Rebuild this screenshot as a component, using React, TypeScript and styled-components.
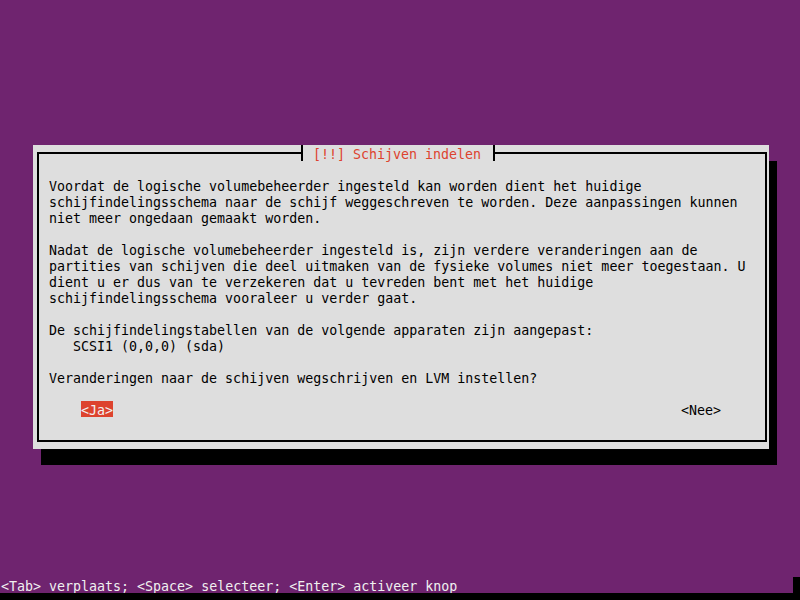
import React from "react";
import styled, { createGlobalStyle } from "styled-components";

const Global = createGlobalStyle`
  html, body { margin: 0; padding: 0; background: #6f246f; }
  body { width: 800px; height: 600px; overflow: hidden; }
`;

const PURPLE = "#6f246f";
const GRAY = "#dedede";
const RED = "#dd432e";

const Screen = styled.div`
  width: 800px;
  height: 600px;
  background: ${PURPLE};
  display: flex;
  flex-direction: column;
  font-family: "DejaVu Sans Mono", "Liberation Mono", monospace;
  font-size: 13.3px;
  line-height: 20px;
  white-space: pre;
`;

const Dialog = styled.div`
  position: relative;
  margin: 145px 0 0 33px;
  width: 736px;
  box-sizing: border-box;
  padding: 7px 2px 7px 4px;
  background: ${GRAY};
  box-shadow: 8px 16px 0 #000;
  color: #000;
`;

const Frame = styled.div`
  border: 2px solid #000;
  padding: 23px 0 7px 10px;
  display: flex;
  flex-direction: column;
`;

const TitleBar = styled.div`
  position: absolute;
  left: 264px;
  top: 0;
  height: 16px;
  display: flex;
`;

const Tee = styled.span<{ $side: "left" | "right" }>`
  width: 8px;
  height: 16px;
  background: ${(p) =>
    p.$side === "left"
      ? `linear-gradient(to right, transparent 4px, #000 4px, #000 6px, ${GRAY} 6px)`
      : `linear-gradient(to right, ${GRAY} 4px, #000 4px, #000 6px, transparent 6px)`};
`;

const TitleText = styled.span`
  height: 16px;
  background: ${GRAY};
  color: ${RED};
`;

const Line = styled.div`
  height: 16px;
`;

const ButtonRow = styled.div`
  display: flex;
  justify-content: space-between;
  padding: 0 44px 0 32px;
  height: 16px;
`;

const Button = styled.span<{ $focused?: boolean }>`
  display: block;
  height: 16px;
  background: ${(p) => (p.$focused ? RED : "transparent")};
  color: ${(p) => (p.$focused ? "#f2f2f2" : "#000")};
`;

const StatusBar = styled.div`
  margin-top: auto;
  display: flex;
  height: 16px;
  padding-left: 1px;
  color: #f0f0f0;
`;

const StatusText = styled.span`
  flex: 1;
  height: 16px;
`;

const BlackCell = styled.span`
  width: 7px;
  background: #000;
`;

const BottomStrip = styled.div`
  height: 7px;
  background: #000;
`;

const lines = [
  "Voordat de logische volumebeheerder ingesteld kan worden dient het huidige",
  "schijfindelingsschema naar de schijf weggeschreven te worden. Deze aanpassingen kunnen",
  "niet meer ongedaan gemaakt worden.",
  "",
  "Nadat de logische volumebeheerder ingesteld is, zijn verdere veranderingen aan de",
  "partities van schijven die deel uitmaken van de fysieke volumes niet meer toegestaan. U",
  "dient u er dus van te verzekeren dat u tevreden bent met het huidige",
  "schijfindelingsschema vooraleer u verder gaat.",
  "",
  "De schijfindelingstabellen van de volgende apparaten zijn aangepast:",
  "   SCSI1 (0,0,0) (sda)",
  "",
  "Veranderingen naar de schijven wegschrijven en LVM instellen?",
  "",
];

export default function App() {
  return (
    <>
      <Global />
      <Screen>
        <Dialog>
          <TitleBar>
            <Tee $side="left" />
            <TitleText> [!!] Schijven indelen </TitleText>
            <Tee $side="right" />
          </TitleBar>
          <Frame>
            {lines.map((l, i) => (
              <Line key={i}>{l}</Line>
            ))}
            <ButtonRow>
              <Button $focused>&lt;Ja&gt;</Button>
              <Button>&lt;Nee&gt;</Button>
            </ButtonRow>
            <Line />
          </Frame>
        </Dialog>
        <StatusBar>
          <StatusText>&lt;Tab&gt; verplaats; &lt;Space&gt; selecteer; &lt;Enter&gt; activeer knop</StatusText>
          <BlackCell />
        </StatusBar>
        <BottomStrip />
      </Screen>
    </>
  );
}
